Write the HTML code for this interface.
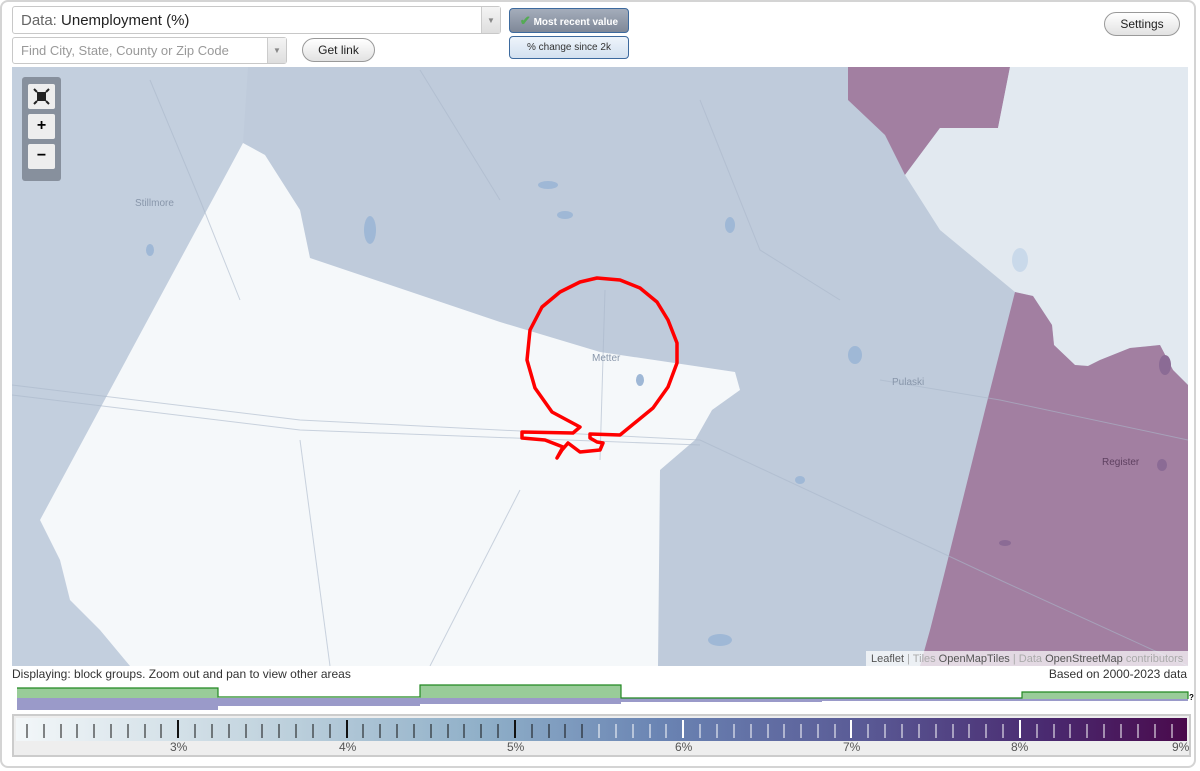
<!DOCTYPE html>
<html><head><meta charset="utf-8"><style>
body{margin:0;width:1200px;height:771px;background:#fff;font-family:"Liberation Sans",sans-serif;overflow:hidden;position:relative}
.frame{position:absolute;left:0;top:0;width:1196px;height:768px;border:2px solid #d4d4d4;border-radius:8px;box-sizing:border-box}
.sel{position:absolute;background:#fff;border:1px solid #c8c8c8;border-radius:3px;box-sizing:border-box}
.arr{position:absolute;right:0;top:0;bottom:0;width:18px;border-left:1px solid #ccc;background:linear-gradient(#f4f4f4,#dedede);color:#888;font-size:8px;text-align:center}
.btn{position:absolute;border:1px solid #999;border-radius:12px;background:linear-gradient(#fff,#e2e2e2);font-size:12px;text-align:center;box-sizing:border-box;color:#222}
.tog{position:absolute;border:1px solid #3d6a9e;border-radius:4px;font-size:10px;text-align:center;box-sizing:border-box}
.lab{position:absolute;top:740px;font-size:12px;color:#555}
</style></head><body>
<div class="frame"></div>
<div class="sel" style="left:12px;top:6px;width:489px;height:28px;font-size:15px;color:#222;line-height:27px;padding-left:8px"><span style="color:#666">Data:</span> Unemployment (%)<div class="arr" style="line-height:27px">▼</div></div>
<div class="sel" style="left:12px;top:37px;width:275px;height:27px;font-size:13px;color:#999;line-height:26px;padding-left:8px">Find City, State, County or Zip Code<div class="arr" style="line-height:26px;width:18px">▼</div></div>
<div class="btn" style="left:302px;top:38px;width:73px;height:24px;line-height:22px">Get link</div>
<div class="tog" style="left:509px;top:8px;width:120px;height:25px;line-height:23px;background:linear-gradient(#a4adbb,#7f8898);color:#fff;font-weight:bold"><span style="color:#5a5;font-size:13px">✔</span> Most recent value</div>
<div class="tog" style="left:509px;top:36px;width:120px;height:23px;line-height:21px;background:linear-gradient(#eef4fb,#d3e1f0);color:#333">% change since 2k</div>
<div class="btn" style="left:1104px;top:12px;width:76px;height:24px;line-height:22px">Settings</div>

<svg style="position:absolute;left:12px;top:67px" width="1176" height="599" viewBox="12 67 1176 599">
<rect x="12" y="67" width="1176" height="599" fill="#c3cfde"/>
<polygon points="248,67 848,67 848,100 885,135 905,175 940,230 1015,292 985,410 944,575 920,666 658,666 660,470 695,440 712,410 740,390 735,372 600,352 500,322 310,258 300,210 265,155 243,143" fill="#bfcbdb"/>
<polygon points="243,143 265,155 300,210 310,258 500,322 600,352 735,372 740,390 712,410 695,440 660,470 658,666 130,666 100,630 70,600 60,560 40,520" fill="#f5f8fa"/>
<polygon points="848,67 1010,67 998,128 940,128 905,175 885,135 848,100" fill="#a27fa1"/>
<polygon points="1010,67 1188,67 1188,385 1173,370 1160,345 1130,348 1100,360 1088,366 1075,365 1054,345 1052,325 1033,296 1015,292 940,230 905,175 940,128 998,128" fill="#e2e9f0"/>
<polygon points="1015,292 1033,296 1052,325 1054,345 1075,365 1088,366 1100,360 1130,348 1160,345 1173,370 1188,385 1188,666 920,666 930,630 944,575 985,410" fill="#a27fa1"/>
<g stroke="#aab8c9" stroke-opacity="0.6" fill="none" stroke-width="1">
<path d="M12,385 L300,420 L700,440 L1000,580 L1188,666"/><path d="M12,395 L300,430 L700,445"/>
<path d="M300,440 L330,666"/><path d="M520,490 L430,666"/><path d="M605,290 L600,460"/>
<path d="M700,100 L760,250 L840,300"/><path d="M420,70 L500,200"/>
<path d="M150,80 L200,200 L240,300"/><path d="M880,380 L1000,400 L1188,440"/>
</g>
<g fill="#9fb8d6"><ellipse cx="370" cy="230" rx="6" ry="14"/><ellipse cx="548" cy="185" rx="10" ry="4"/><ellipse cx="730" cy="225" rx="5" ry="8"/><ellipse cx="855" cy="355" rx="7" ry="9"/><ellipse cx="720" cy="640" rx="12" ry="6"/><ellipse cx="640" cy="380" rx="4" ry="6"/><ellipse cx="565" cy="215" rx="8" ry="4"/><ellipse cx="1020" cy="260" rx="8" ry="12" fill="#c9d9ea"/><ellipse cx="150" cy="250" rx="4" ry="6"/><ellipse cx="800" cy="480" rx="5" ry="4"/></g>
<g fill="#8b6b95"><ellipse cx="1165" cy="365" rx="6" ry="10"/><ellipse cx="1162" cy="465" rx="5" ry="6"/><ellipse cx="1005" cy="543" rx="6" ry="3"/></g>
<g font-size="10" fill="#8896aa"><text x="135" y="206">Stillmore</text><text x="592" y="361">Metter</text><text x="892" y="385">Pulaski</text><text x="1102" y="465" fill="#5e4060">Register</text></g>
<path d="M580,427 L552,412 L535,388 L527,360 L530,330 L542,307 L560,292 L580,282 L597,278 L620,280 L640,288 L657,302 L668,320 L677,343 L677,363 L668,387 L653,408 L620,435 L590,434 L590,438 L597,442 L603,443 L600,450 L580,452 L568,443 L562,450 L557,458 L563,447 L545,440 L522,438 L522,432 L573,433 Z" fill="none" stroke="#f00" stroke-width="3.5" stroke-linejoin="round"/>
<rect x="866" y="651" width="322" height="15" fill="rgba(255,255,255,0.7)"/>
<text x="871" y="662" font-size="11" fill="#555">Leaflet <tspan fill="#aaa">| Tiles</tspan> OpenMapTiles <tspan fill="#aaa">| Data</tspan> OpenStreetMap <tspan fill="#aaa">contributors</tspan></text>
</svg>
<div style="position:absolute;left:22px;top:77px;width:39px;height:104px;background:rgba(120,128,140,0.8);border-radius:3px"></div>
<div style="position:absolute;left:28px;top:84px;width:27px;height:25px;background:#eee;border-radius:2px"><svg width="27" height="25"><rect x="9" y="8" width="9" height="9" fill="#222"/><path d="M6,5 l3,3 M21,5 l-3,3 M6,20 l3,-3 M21,20 l-3,-3" stroke="#222" stroke-width="2"/></svg></div>
<div style="position:absolute;left:28px;top:114px;width:27px;height:25px;background:#eee;border-radius:2px;text-align:center;line-height:24px;font-weight:bold;font-size:16px">+</div>
<div style="position:absolute;left:28px;top:144px;width:27px;height:25px;background:#eee;border-radius:2px;text-align:center;line-height:23px;font-weight:bold;font-size:16px">−</div>
<div style="position:absolute;left:12px;top:667px;font-size:12px;color:#333">Displaying: block groups. Zoom out and pan to view other areas</div>
<div style="position:absolute;right:13px;top:667px;font-size:12px;color:#333">Based on 2000-2023 data</div>
<svg style="position:absolute;left:0;top:680px" width="1200" height="34">
<g fill="#9a9ac9"><rect x="17" y="18" width="201" height="12"/><rect x="218" y="18" width="202" height="8"/><rect x="420" y="18" width="201" height="6"/><rect x="621" y="18" width="201" height="4"/><rect x="822" y="18" width="366" height="3"/></g>
<g fill="#99cc99"><rect x="17" y="8" width="201" height="10"/><rect x="420" y="5" width="201" height="13"/><rect x="1022" y="12" width="166" height="7"/></g>
<path d="M17,8 H218 V17 H420 V5 H621 V18 H1022 V12 H1188 V19" fill="none" stroke="#228822" stroke-width="1.2"/>
<text x="1189" y="20" font-size="8" font-weight="bold">?</text>
</svg>
<div style="position:absolute;left:12px;top:714px;width:1179px;height:43px;border:2px solid #ccc;box-sizing:border-box;background:#eee">
<div style="position:absolute;left:2px;top:2px;right:2px;height:23px;background:linear-gradient(90deg,#f3f7f9,#c5d6e0 20%,#8fafc8 40%,#6a84b3 55%,#5a5b96 72%,#4a2a70 88%,#4a0a4c)"></div>
</div>
<svg style="position:absolute;left:12px;top:716px" width="1179" height="24">
<g stroke-width="1">
<path stroke="#111" d="M15,8V22M32,8V22M49,8V22M65,8V22M82,8V22M99,8V22M116,8V22M133,8V22M149,8V22M183,8V22M200,8V22M217,8V22M234,8V22M250,8V22M267,8V22M284,8V22M301,8V22M318,8V22M351,8V22M368,8V22M385,8V22M402,8V22M419,8V22M436,8V22M452,8V22M469,8V22M486,8V22M520,8V22M537,8V22M553,8V22"/>
<path stroke="#111" stroke-width="2" d="M166,4V22M335,4V22M503,4V22"/>
<path stroke="#fff" d="M587,8V22M604,8V22M621,8V22M638,8V22M654,8V22M688,8V22M705,8V22M722,8V22M739,8V22M756,8V22M772,8V22M789,8V22M806,8V22M823,8V22M856,8V22M873,8V22M890,8V22M907,8V22M924,8V22M941,8V22M957,8V22M974,8V22M991,8V22M1025,8V22M1042,8V22M1058,8V22M1075,8V22M1092,8V22M1109,8V22M1126,8V22M1143,8V22M1160,8V22"/>
<path stroke="#111" d="M570,8V22"/>
<path stroke="#fff" stroke-width="2" d="M671,4V22M839,4V22M1008,4V22"/>
</g></svg>
<div class="lab" style="left:170px">3%</div><div class="lab" style="left:339px">4%</div><div class="lab" style="left:507px">5%</div><div class="lab" style="left:675px">6%</div><div class="lab" style="left:843px">7%</div><div class="lab" style="left:1011px">8%</div><div class="lab" style="left:1172px">9%</div>
</body></html>
